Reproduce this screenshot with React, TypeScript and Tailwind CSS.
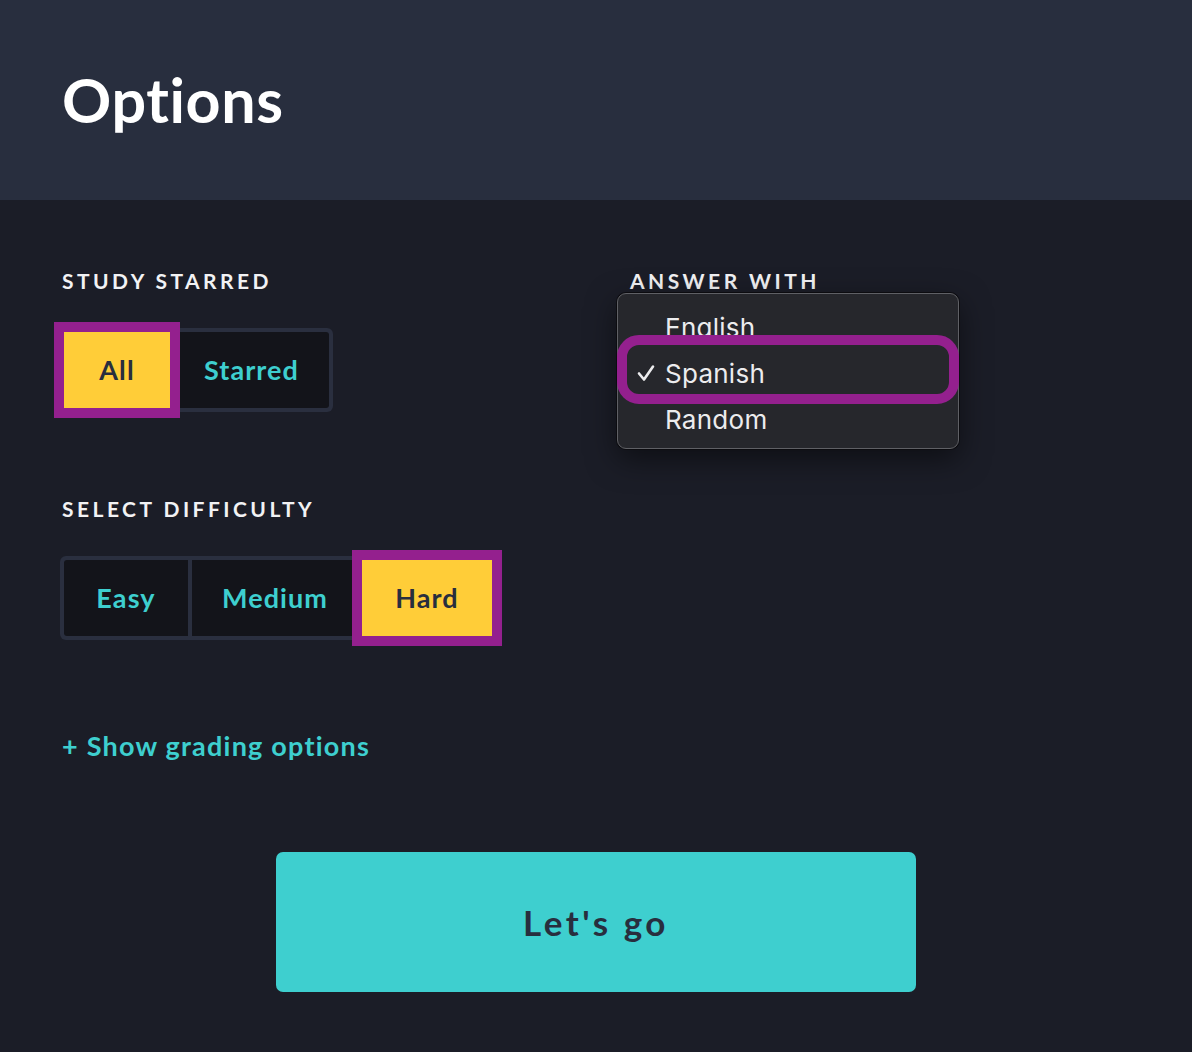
import React from "react";

const font = { fontFamily: "Lato, 'Noto Sans', sans-serif" };

function Label({ children }: { children: React.ReactNode }) {
  return (
    <div className="text-[21px] leading-[24px] font-bold tracking-[0.165em] text-[#f2f2f4] uppercase">
      {children}
    </div>
  );
}

export default function App() {
  return (
    <div className="w-[1192px] h-[1052px] bg-[#1b1d27] flex flex-col" style={font}>
      <header className="h-[200px] bg-[#282e3e] px-[62px] pt-[70px]">
        <h1 className="text-[61px] leading-[60px] font-bold text-white tracking-[0.01em]">Options</h1>
      </header>

      <main className="flex flex-col px-[60px] pt-[69px]">
        <div className="flex">
          <div className="w-[568px] flex flex-col pl-[2px]">
            <Label>Study starred</Label>
            <div className="mt-[35px] -ml-[2px] flex self-start gap-[4px] p-[4px] bg-[#2a2f3f] rounded-[6px]">
              <button className="w-[106px] h-[76px] bg-[#ffcd38] text-[#282e3e] text-[27px] font-bold tracking-[0.04em] outline-[10px] outline-[#94208e] z-10">
                All
              </button>
              <button className="w-[155px] h-[76px] bg-[#13141a] text-[#3ecfcf] text-[27px] font-bold tracking-[0.04em] rounded-r-[3px]">
                Starred
              </button>
            </div>
          </div>

          <div className="relative flex flex-col pl-[2px]">
            <Label>Answer with</Label>
            <div
              className="absolute left-[-11px] top-[24px] w-[342px] h-[156px] rounded-[9px] bg-[#26272c] border border-[#5f6065] shadow-[0_0_0_1px_#0c0c10,0_10px_30px_rgba(0,0,0,0.5)] pt-[10px] text-[26px] tracking-[0.01em] text-[#ececee]"
              style={{ fontFamily: "Inter, 'Liberation Sans', sans-serif" }}
            >
              <div className="h-[46px] flex items-center pl-[47px]">English</div>
              <div className="h-[46px] flex items-center pl-[19px]">
                <svg width="18" height="18" viewBox="0 0 18 18" className="mr-[10px]">
                  <path d="M2 9.5 L7 15.5 L16 2.5" fill="none" stroke="#ececee" strokeWidth="2.6" strokeLinecap="round" strokeLinejoin="round" />
                </svg>
                Spanish
              </div>
              <div className="h-[46px] flex items-center pl-[47px]">Random</div>
              <div className="absolute left-[-1px] top-[41px] w-[342px] h-[69px] rounded-[22px] border-[10px] border-[#94208e]" />
            </div>
          </div>
        </div>

        <div className="mt-[85px] pl-[2px]">
          <Label>Select difficulty</Label>
        </div>
        <div className="mt-[35px] flex self-start gap-[4px] p-[4px] bg-[#2a2f3f] rounded-[6px]">
          <button className="w-[124px] h-[76px] bg-[#13141a] text-[#3ecfcf] text-[27px] font-bold tracking-[0.04em] rounded-l-[3px]">
            Easy
          </button>
          <button className="w-[166px] h-[76px] bg-[#13141a] text-[#3ecfcf] text-[27px] font-bold tracking-[0.04em]">
            Medium
          </button>
          <button className="w-[130px] h-[76px] bg-[#ffcd38] text-[#282e3e] text-[27px] font-bold tracking-[0.04em] outline-[10px] outline-[#94208e]">
            Hard
          </button>
        </div>

        <div className="mt-[90px] pl-[2px] text-[27px] leading-[32px] font-bold tracking-[0.045em] text-[#3ecfcf]">
          + Show grading options
        </div>

        <div className="mt-[90px] flex justify-center">
          <button className="w-[640px] h-[140px] rounded-[7px] bg-[#3ecfcf] text-[#282e3e] text-[35px] font-bold tracking-[0.1em]">
            Let's go
          </button>
        </div>
      </main>
    </div>
  );
}
